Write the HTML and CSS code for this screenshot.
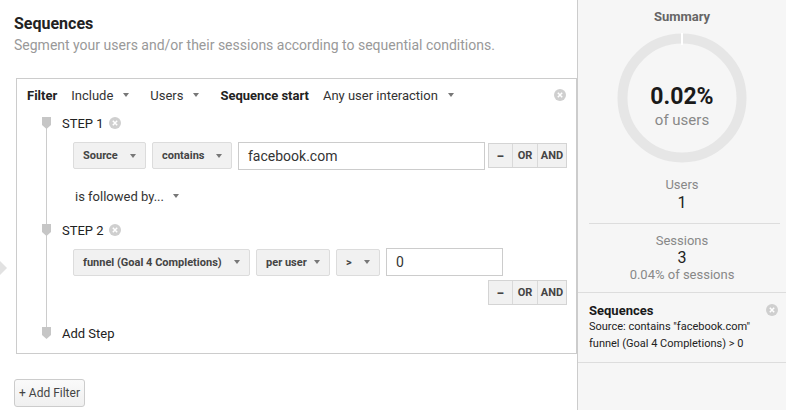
FILE: index.html
```html
<!DOCTYPE html>
<html>
<head>
<meta charset="utf-8">
<link rel="stylesheet" href="styles.css">
</head>
<body>
<div class="page">
  <svg class="edge-arrow" width="8" height="16" viewBox="0 0 8 16"><polygon points="0,1 7,8 0,15" fill="#e2e2e2"/></svg>
  <main class="main">
    <h1 class="title">Sequences</h1>
    <p class="subtitle">Segment your users and/or their sessions according to sequential conditions.</p>
    <section class="filter-box">
      <div class="filter-row">
        <span class="lbl-bold">Filter</span>
        <span class="dd">Include <i class="caret"></i></span>
        <span class="dd">Users <i class="caret"></i></span>
        <span class="lbl-bold">Sequence start</span>
        <span class="dd">Any user interaction <i class="caret"></i></span>
        <span class="spacer"></span>
        <svg class="xicon" width="12" height="12" viewBox="0 0 12 12"><circle cx="6" cy="6" r="6" fill="#cfcfcf"/><path d="M3.8 3.8l4.4 4.4M8.2 3.8l-4.4 4.4" stroke="#fff" stroke-width="1.5"/></svg>
      </div>
      <div class="timeline">
        <div class="step-head">
          <svg class="marker" width="9" height="12" viewBox="0 0 9 12"><polygon points="0,0 9,0 9,8 4.5,12 0,8" fill="#c6c6c6"/></svg>
          <span class="step-name">STEP 1</span>
          <svg class="xicon" width="12" height="12" viewBox="0 0 12 12"><circle cx="6" cy="6" r="6" fill="#cfcfcf"/><path d="M3.8 3.8l4.4 4.4M8.2 3.8l-4.4 4.4" stroke="#fff" stroke-width="1.5"/></svg>
        </div>
        <div class="cond-row row1">
          <span class="btn w-source">Source <i class="caret"></i></span>
          <span class="btn w-contains">contains <i class="caret"></i></span>
          <span class="input w-fb">facebook.com</span>
          <span class="logic"><span class="lc lc-minus">−</span><span class="lc lc-or">OR</span><span class="lc lc-and">AND</span></span>
        </div>
        <div class="followed">is followed by... <i class="caret"></i></div>
        <div class="step-head step2">
          <svg class="marker" width="9" height="12" viewBox="0 0 9 12"><polygon points="0,0 9,0 9,8 4.5,12 0,8" fill="#c6c6c6"/></svg>
          <span class="step-name">STEP 2</span>
          <svg class="xicon" width="12" height="12" viewBox="0 0 12 12"><circle cx="6" cy="6" r="6" fill="#cfcfcf"/><path d="M3.8 3.8l4.4 4.4M8.2 3.8l-4.4 4.4" stroke="#fff" stroke-width="1.5"/></svg>
        </div>
        <div class="cond-row row2">
          <span class="btn w-funnel">funnel (Goal 4 Completions) <i class="caret"></i></span>
          <span class="btn w-peruser">per user <i class="caret"></i></span>
          <span class="btn w-gt">&gt; <i class="caret"></i></span>
          <span class="input w-zero">0</span>
        </div>
        <div class="logic-row">
          <span class="logic"><span class="lc lc-minus">−</span><span class="lc lc-or">OR</span><span class="lc lc-and">AND</span></span>
        </div>
        <div class="step-head add-step">
          <svg class="marker" width="9" height="12" viewBox="0 0 9 12"><polygon points="0,0 9,0 9,8 4.5,12 0,8" fill="#c6c6c6"/></svg>
          <span class="step-name">Add Step</span>
        </div>
      </div>
    </section>
    <button class="add-filter">+ Add Filter</button>
  </main>
  <aside class="side">
    <div class="sum-title">Summary</div>
    <div class="donut">
      <svg width="130" height="130" viewBox="0 0 130 130"><circle cx="65" cy="65" r="59.5" fill="none" stroke="#e6e6e6" stroke-width="10"/><rect x="64" y="0" width="2" height="12" fill="#fff"/></svg>
      <div class="donut-text">
        <div class="pct">0.02%</div>
        <div class="pct-lbl">of users</div>
      </div>
    </div>
    <div class="stat users">
      <div class="stat-lbl">Users</div>
      <div class="stat-val">1</div>
    </div>
    <div class="div-inner"></div>
    <div class="stat sessions">
      <div class="stat-lbl">Sessions</div>
      <div class="stat-val">3</div>
      <div class="stat-sub">0.04% of sessions</div>
    </div>
    <div class="seq">
      <div class="seq-head">
        <span class="seq-title">Sequences</span>
        <svg class="xicon" width="12" height="12" viewBox="0 0 12 12"><circle cx="6" cy="6" r="6" fill="#cfcfcf"/><path d="M3.8 3.8l4.4 4.4M8.2 3.8l-4.4 4.4" stroke="#fff" stroke-width="1.5"/></svg>
      </div>
      <div class="seq-line">Source: contains "facebook.com"</div>
      <div class="seq-line">funnel (Goal 4 Completions) &gt; 0</div>
    </div>
  </aside>
</div>
</body>
</html>
```

FILE: styles.css
```css
* { box-sizing: border-box; }
html, body { margin: 0; padding: 0; background: #fff; }
body { font-family: Roboto, "Liberation Sans", Arial, sans-serif; color: #222; }

.page { display: flex; width: 786px; height: 410px; position: relative; overflow: hidden; }

.edge-arrow { position: absolute; left: 0; top: 260px; }

.main { width: 577px; flex: none; padding-left: 14px; }
.title { margin: 14px 0 0; font-size: 16px; line-height: 20px; font-weight: 700; color: #222; }
.subtitle { margin: 1px 0 0; font-size: 14px; line-height: 20px; color: #999; }

.filter-box { margin: 23px 0 0 2px; border: 1px solid #ccc; padding: 0 0 12px; width: 561px; }

.filter-row { display: flex; align-items: center; height: 32px; padding: 0 10px; font-size: 13px; color: #333; }
.lbl-bold { font-weight: 700; color: #222; margin-right: 14px; }
.dd { display: inline-flex; align-items: center; margin-right: 21px; }
.dd .caret { margin-left: 10px; }
.spacer { flex: 1; }

.caret { display: inline-block; width: 0; height: 0; border-left: 3.5px solid transparent; border-right: 3.5px solid transparent; border-top: 4px solid #777; }

.xicon { display: block; flex: none; }

.timeline { position: relative; }
.timeline::before { content: ""; position: absolute; left: 29px; top: 8px; bottom: 12px; width: 1px; background: #ccc; }

.step-head { display: flex; align-items: center; height: 16px; margin-top: 4px; font-size: 13px; color: #222; position: relative; }
.step-head .marker { margin-left: 25px; margin-right: 11px; display: block; }
.step-name { margin-right: 5px; }
.step2 { margin-top: 16px; }
.add-step { margin-top: 20px; }

.cond-row { display: flex; align-items: center; padding-left: 56px; }
.row1 { margin-top: 11px; height: 27px; }
.row2 { margin-top: 10px; height: 28px; }

.btn { display: inline-flex; align-items: center; justify-content: space-between; height: 27px; padding: 0 9px; margin-right: 6px; background: #f1f1f1; border: 1px solid #dcdcdc; border-radius: 2px; font-size: 11px; font-weight: 700; color: #444; }
.w-source { width: 73px; }
.w-contains { width: 80px; }
.w-funnel { width: 177px; }
.w-peruser { width: 74px; }
.w-gt { width: 44px; }

.input { display: inline-flex; align-items: center; height: 28px; border: 1px solid #ccc; padding-left: 9px; font-size: 14px; color: #333; background: #fff; }
.w-fb { width: 247px; margin-right: 3px; }
.w-zero { width: 117px; }

.logic { display: inline-flex; height: 25px; border: 1px solid #d4d4d4; background: #f1f1f1; font-size: 11px; font-weight: 700; color: #444; }
.lc { display: flex; align-items: center; justify-content: center; }
.lc + .lc { border-left: 1px solid #d9d9d9; }
.lc-minus { width: 23px; font-size: 14px; }
.lc-or { width: 25px; }
.lc-and { width: 29px; }

.followed { display: flex; align-items: center; height: 20px; margin-top: 17px; padding-left: 58px; font-size: 13px; color: #333; }
.followed .caret { margin-left: 9px; }

.logic-row { display: flex; justify-content: flex-end; margin-top: 4px; padding-right: 9px; height: 25px; }

.add-filter { display: block; margin-top: 25px; width: 71px; height: 28px; padding: 0; border: 1px solid #ccc; border-radius: 3px; background: linear-gradient(#fafafa, #f0f0f0); font-family: Roboto, "Liberation Sans", Arial, sans-serif; font-size: 12px; color: #444; }

.side { flex: 1; background: #f6f6f6; border-left: 1px solid #ccc; display: flex; flex-direction: column; }
.sum-title { text-align: center; font-size: 13px; font-weight: 700; color: #666; line-height: 16px; margin-top: 9px; }
.donut { position: relative; width: 130px; height: 130px; margin: 8px auto 0; }
.donut svg { display: block; }
.donut-text { position: absolute; left: 0; right: 0; top: 50px; text-align: center; }
.pct { font-size: 23px; font-weight: 700; color: #1a1a1a; line-height: 28px; }
.pct-lbl { font-size: 15px; color: #888; line-height: 18px; }

.stat { text-align: center; }
.users { margin-top: 14px; }
.stat-lbl { font-size: 13px; color: #888; line-height: 16px; }
.stat-val { font-size: 16px; color: #222; line-height: 18px; }
.users .stat-val { margin-top: 1px; }
.stat-sub { font-size: 13px; color: #888; line-height: 16px; }
.div-inner { height: 1px; background: #ddd; margin: 11px 6px 0 11px; }
.sessions { margin-top: 9px; padding-bottom: 9px; border-bottom: 1px solid #ddd; }

.seq { padding: 9px 8px 10px 11px; border-bottom: 1px solid #ddd; }
.seq-head { display: flex; justify-content: space-between; align-items: center; height: 16px; }
.seq-title { font-size: 13px; font-weight: 700; color: #1a1a1a; }
.seq-line { font-size: 11px; line-height: 17px; color: #222; }
```
